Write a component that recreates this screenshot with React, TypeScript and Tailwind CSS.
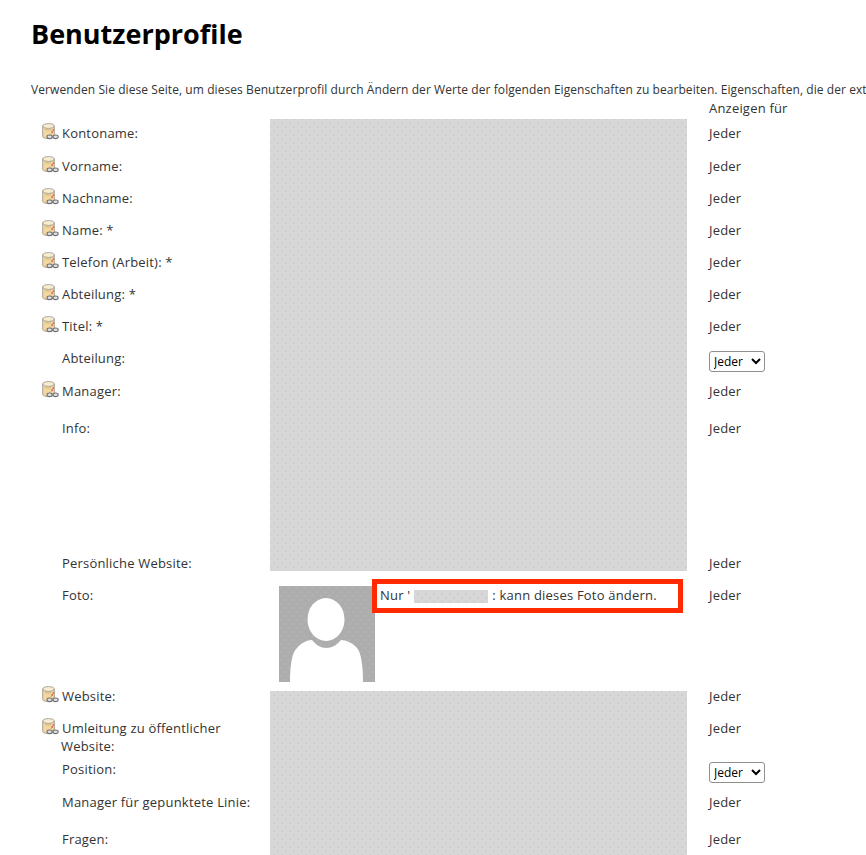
const GRAY =
  'bg-[#d7d7d7] bg-[radial-gradient(#cdcdcd_0.7px,transparent_1px),radial-gradient(#cdcdcd_0.7px,transparent_1px)] bg-[length:8px_8px] bg-[position:0_0,4px_4px]';

function LinkIcon() {
  return (
    <svg width="17" height="17" viewBox="0 0 17 17" className="-mt-[1px] shrink-0">
      <path d="M.7 3v10.4c0 1.3 2.7 2.2 5.8 2.2s5.8-.9 5.8-2.2V3z" fill="#f2d7a0" stroke="#a8a297" strokeWidth="1" />
      <ellipse cx="6.5" cy="3" rx="5.8" ry="2.4" fill="#f9ecd2" stroke="#a8a297" strokeWidth="1" />
      <path d="M3 6.6c1.8.6 4 .6 6 .1" fill="none" stroke="#c4a875" strokeWidth=".7" />
      <path d="M11.6 6.5l-2.4 4" stroke="#e0352b" strokeWidth="1.3" strokeDasharray="1.4 .8" />
      <ellipse cx="7.6" cy="13.8" rx="2.6" ry="1.8" fill="#e2e2e2" stroke="#6d7178" strokeWidth="1.1" />
      <ellipse cx="13.6" cy="13.8" rx="2.6" ry="1.8" fill="#e2e2e2" stroke="#6d7178" strokeWidth="1.1" />
    </svg>
  );
}

function Label({ text, icon }: { text: string; icon?: boolean }) {
  return (
    <div className="flex items-start pt-[5px] pl-[11px]">
      <span className="h-[19px] w-[20px] shrink-0">{icon && <LinkIcon />}</span>
      <span>{text}</span>
    </div>
  );
}

function Shown() {
  return <div className="pt-[5px]">Jeder</div>;
}

function ShownSelect() {
  return (
    <div className="pt-[7px]">
      <select className="block h-[21px] w-[56px] rounded-[3px] border border-[#8f8f8f] bg-white text-[12px] tracking-normal text-black">
        <option>Jeder</option>
      </select>
    </div>
  );
}

// label, has icon, select instead of text, row height
const topRows: [string, boolean, boolean, number][] = [
  ['Kontoname:', true, false, 33],
  ['Vorname:', true, false, 32],
  ['Nachname:', true, false, 32],
  ['Name: *', true, false, 32],
  ['Telefon (Arbeit): *', true, false, 32],
  ['Abteilung: *', true, false, 32],
  ['Titel: *', true, false, 32],
  ['Abteilung:', false, true, 33],
  ['Manager:', true, false, 37],
  ['Info:', false, false, 135],
  ['Persönliche Website:', false, false, 32],
];

export default function App() {
  return (
    <div className="h-[855px] w-[866px] overflow-hidden bg-white font-['Open_Sans','Noto_Sans',sans-serif] text-[13px] leading-[18px] tracking-[0.2px] text-[#333]">
      <h1 className="pl-[31px] pt-[15px] text-[27px] font-bold leading-[38px] tracking-normal text-black">Benutzerprofile</h1>
      <p className="mt-[28px] whitespace-nowrap pl-[31px] text-[12px] leading-[18px] tracking-[0.07px]">
        Verwenden Sie diese Seite, um dieses Benutzerprofil durch Ändern der Werte der folgenden Eigenschaften zu bearbeiten. Eigenschaften, die der ext
      </p>
      <div className="grid grid-cols-[239px_439px_1fr] pl-[31px]">
        <div className="h-[20px]" />
        <div />
        <div>Anzeigen für</div>
      </div>

      <div className="grid grid-cols-[239px_439px_1fr] pl-[31px]">
        <div>
          {topRows.map(([label, icon, , height]) => (
            <div key={label} style={{ height }}>
              <Label text={label} icon={icon} />
            </div>
          ))}
        </div>
        <div className={`h-[452px] w-[417px] ${GRAY}`} />
        <div>
          {topRows.map(([label, , select, height]) => (
            <div key={label} style={{ height }}>
              {select ? <ShownSelect /> : <Shown />}
            </div>
          ))}
        </div>
      </div>

      <div className="relative grid h-[101px] grid-cols-[239px_439px_1fr] pl-[31px]">
        <Label text="Foto:" />
        <div className="pl-[9px] pt-[5px]">
          <svg width="96" height="96" viewBox="0 0 96 96" className="block">
            <defs>
              <pattern id="avatar-dots" width="8" height="8" patternUnits="userSpaceOnUse">
                <circle cx="2" cy="2" r=".7" fill="#b8b8b8" />
                <circle cx="6" cy="6" r=".7" fill="#b8b8b8" />
              </pattern>
            </defs>
            <rect width="96" height="96" fill="#adadad" />
            <rect width="96" height="96" fill="url(#avatar-dots)" />
            <ellipse cx="47" cy="33.5" rx="18.5" ry="21.5" fill="#fff" />
            <path d="M11 96C11 80 13 66 18 62C22 57 28 54 33 54C37 59 42 62 47 62C53 62 58 59 62 54C67 54 74 57 78 62C82 66 84 80 84 96Z" fill="#fff" />
          </svg>
        </div>
        <Shown />
        <div className="absolute left-[372px] top-[-2px] h-[34px] w-[311px] border-[5px] border-[#ff2a00] pl-[3px] pt-[2px]">
          <span className="flex items-center whitespace-nowrap">
            Nur '<span className={`mx-[4px] mt-[2px] h-[13px] w-[74px] ${GRAY}`} />: kann dieses Foto ändern.
          </span>
        </div>
      </div>

      <div className="grid grid-cols-[239px_439px_1fr] pl-[31px]">
        <div>
          <div className="h-[32px]">
            <Label text="Website:" icon />
          </div>
          <div className="h-[41px]">
            <div className="flex items-start pl-[11px] pt-[5px]">
              <span className="h-[19px] w-[19px] shrink-0">
                <LinkIcon />
              </span>
              <span className="w-[200px]">
                <span className="pl-[1px]">Umleitung zu öffentlicher</span>
                <br />
                Website:
              </span>
            </div>
          </div>
          <div className="h-[33px]">
            <Label text="Position:" />
          </div>
          <div className="h-[37px]">
            <Label text="Manager für gepunktete Linie:" />
          </div>
          <Label text="Fragen:" />
        </div>
        <div className={`mt-[9px] h-[170px] w-[417px] ${GRAY}`} />
        <div>
          <div className="h-[32px]">
            <Shown />
          </div>
          <div className="h-[41px]">
            <Shown />
          </div>
          <div className="h-[33px]">
            <ShownSelect />
          </div>
          <div className="h-[37px]">
            <Shown />
          </div>
          <Shown />
        </div>
      </div>
    </div>
  );
}
